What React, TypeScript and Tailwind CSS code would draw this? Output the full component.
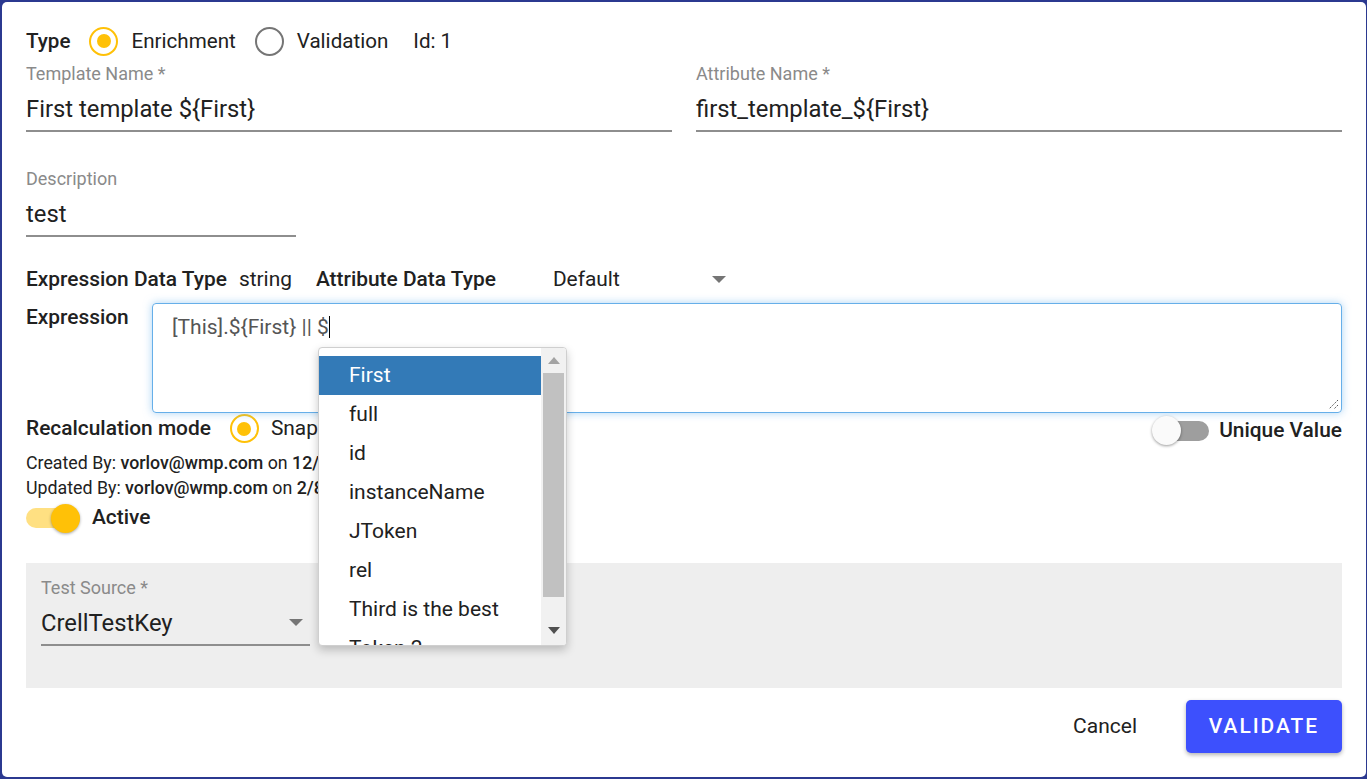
import React from "react";

const font = { fontFamily: "Roboto, 'Noto Sans', sans-serif" };

function Radio({ checked }: { checked: boolean }) {
  return checked ? (
    <div className="w-[29px] h-[29px] rounded-full border-[2.5px] border-[#ffc107] flex items-center justify-center shrink-0">
      <div className="w-[14px] h-[14px] rounded-full bg-[#ffc107]" />
    </div>
  ) : (
    <div className="w-[29px] h-[29px] rounded-full border-[2.5px] border-[#757575] shrink-0" />
  );
}

function Field({ label, value, className }: { label: string; value: string; className?: string }) {
  return (
    <div className={className}>
      <div className="h-[20px] leading-[20px] text-[18px] text-[#8a8a8a]">{label}</div>
      <div className="pt-[10px] pb-[6px] leading-[30px] text-[23.8px] text-[#212121] border-b-2 border-[#8e8e8e]">{value}</div>
    </div>
  );
}

function Caret() {
  return (
    <svg width="14" height="8" viewBox="0 0 14 8" className="shrink-0">
      <path d="M0 0 L14 0 L7 7 Z" fill="#757575" />
    </svg>
  );
}

const items = ["First", "full", "id", "instanceName", "JToken", "rel", "Third is the best", "Token 2"];

export default function App() {
  return (
    <div className="w-[1367px] h-[779px] bg-[#2b3990] pl-[2px] pt-[2px] pb-[2px] pr-px" style={font}>
      <div className="relative h-full bg-white rounded-[5px] px-6 pt-[23px] text-[#212121]">
        {/* Type row */}
        <div className="flex items-center h-[32px] text-[20.6px]">
          <span className="font-medium">Type</span>
          <div className="ml-[19px]"><Radio checked /></div>
          <span className="ml-[13px]">Enrichment</span>
          <div className="ml-[19px]"><Radio checked={false} /></div>
          <span className="ml-[13px]">Validation</span>
          <span className="ml-[25px]">Id: 1</span>
        </div>

        {/* Names */}
        <div className="grid grid-cols-2 gap-6 mt-[7px]">
          <Field label="Template Name *" value="First template ${First}" />
          <Field label="Attribute Name *" value="first_template_${First}" />
        </div>

        <Field label="Description" value="test" className="w-[270px] mt-[37px]" />

        {/* Data types */}
        <div className="flex items-center h-[30px] mt-[28px] text-[20.9px]">
          <span className="font-medium">Expression Data Type</span>
          <span className="ml-3">string</span>
          <span className="ml-6 font-medium">Attribute Data Type</span>
          <div className="ml-[57px] w-[173px] flex items-center justify-between">
            <span>Default</span>
            <Caret />
          </div>
        </div>

        {/* Expression */}
        <div className="flex mt-[8px]">
          <div className="w-[126px] h-[28px] leading-[28px] text-[20.9px] font-medium">Expression</div>
          <div className="relative flex-1 h-[110px] border border-[#66afe9] rounded-[4px] shadow-[0_0_8px_rgba(102,175,233,0.55)] pl-[19px] pt-[11px]">
            <div className="flex items-center leading-[24px] text-[21px] text-[#555]">
              <span>[This].${"{"}First{"}"} || $</span>
              <span className="w-px h-[22px] bg-black" />
            </div>
            <svg className="absolute right-[2px] bottom-[2px]" width="12" height="12" viewBox="0 0 12 12">
              <path d="M11 2 L2 11 M11 7 L7 11" stroke="#555" strokeWidth="1" strokeDasharray="1.5 1" />
            </svg>
          </div>
        </div>

        {/* Recalc row */}
        <div className="flex items-center justify-between h-[32px] mt-[2px] text-[20.9px]">
          <div className="flex items-center -mt-[4px]">
            <span className="font-medium">Recalculation mode</span>
            <div className="ml-[19px]"><Radio checked /></div>
            <span className="ml-[12px]">Snapshot</span>
          </div>
          <div className="flex items-center">
            <div className="relative w-[57px] h-[29px] flex items-center">
              <div className="ml-[7px] w-[50px] h-[20px] rounded-full bg-[#9e9e9e]" />
              <div className="absolute left-0 top-0 w-[29px] h-[29px] rounded-full bg-[#fafafa] shadow-[0_1px_3px_rgba(0,0,0,0.4)]" />
            </div>
            <span className="ml-[10px] font-medium">Unique Value</span>
          </div>
        </div>

        {/* Created/Updated */}
        <div className="mt-[3px] text-[17.8px] leading-[25px]">
          <div>
            Created By: <span className="font-medium">vorlov@wmp.com</span> on <span className="font-medium">12/7/2023</span>
          </div>
          <div>
            Updated By: <span className="font-medium">vorlov@wmp.com</span> on <span className="font-medium">2/8/2024</span>
          </div>
        </div>

        {/* Active */}
        <div className="flex items-center h-[34px] mt-px">
          <div className="relative w-[54px] h-[29px] flex items-center">
            <div className="w-[54px] h-[20px] rounded-full bg-[#ffe082]" />
            <div className="absolute left-[25px] top-0 w-[29px] h-[29px] rounded-full bg-[#ffc107] shadow-[0_1px_3px_rgba(0,0,0,0.35)]" />
          </div>
          <span className="ml-[12px] text-[20.9px] font-medium">Active</span>
        </div>

        {/* Test panel */}
        <div className="mt-[28px] h-[125px] bg-[#eeeeee] pl-[15px] pt-[15px]">
          <div className="w-[269px]">
            <div className="h-[20px] leading-[20px] text-[18px] text-[#8a8a8a]">Test Source *</div>
            <div className="pt-[10px] pb-[6px] leading-[30px] text-[23.8px] border-b-2 border-[#8e8e8e] flex items-center justify-between">
              <span>CrellTestKey</span>
              <span className="mr-[7px]"><Caret /></span>
            </div>
          </div>
        </div>

        {/* Buttons */}
        <div className="flex items-center justify-end mt-[12px]">
          <span className="text-[21px] mr-[49px]">Cancel</span>
          <button className="w-[156px] h-[53px] rounded-[5px] bg-[#3d50fd] text-white text-[20.9px] font-medium tracking-[2px] shadow-[0_2px_4px_rgba(0,0,0,0.3)]">
            VALIDATE
          </button>
        </div>

        {/* Autocomplete dropdown */}
        <div className="absolute left-[316px] top-[345px] w-[249px] h-[299px] bg-white border border-[#cfcfcf] rounded-[4px] shadow-[0_4px_10px_rgba(0,0,0,0.22)] flex overflow-hidden">
          <div className="w-[222px] pt-[8px] overflow-hidden">
            {items.map((it, i) => (
              <div
                key={it}
                className={
                  "h-[39px] leading-[39px] pl-[30px] text-[21px] " +
                  (i === 0 ? "bg-[#337ab7] text-white" : "text-[#212121]")
                }
              >
                {it}
              </div>
            ))}
          </div>
          <div className="w-[25px] bg-[#f1f1f1] flex flex-col items-center">
            <svg className="mt-[9px]" width="12" height="7" viewBox="0 0 12 7"><path d="M0 7 L12 7 L6 0 Z" fill="#a3a3a3" /></svg>
            <div className="mt-[9px] w-[21px] h-[224px] bg-[#c1c1c1]" />
            <svg className="mt-[30px]" width="12" height="7" viewBox="0 0 12 7"><path d="M0 0 L12 0 L6 7 Z" fill="#505050" /></svg>
          </div>
        </div>
      </div>
    </div>
  );
}
